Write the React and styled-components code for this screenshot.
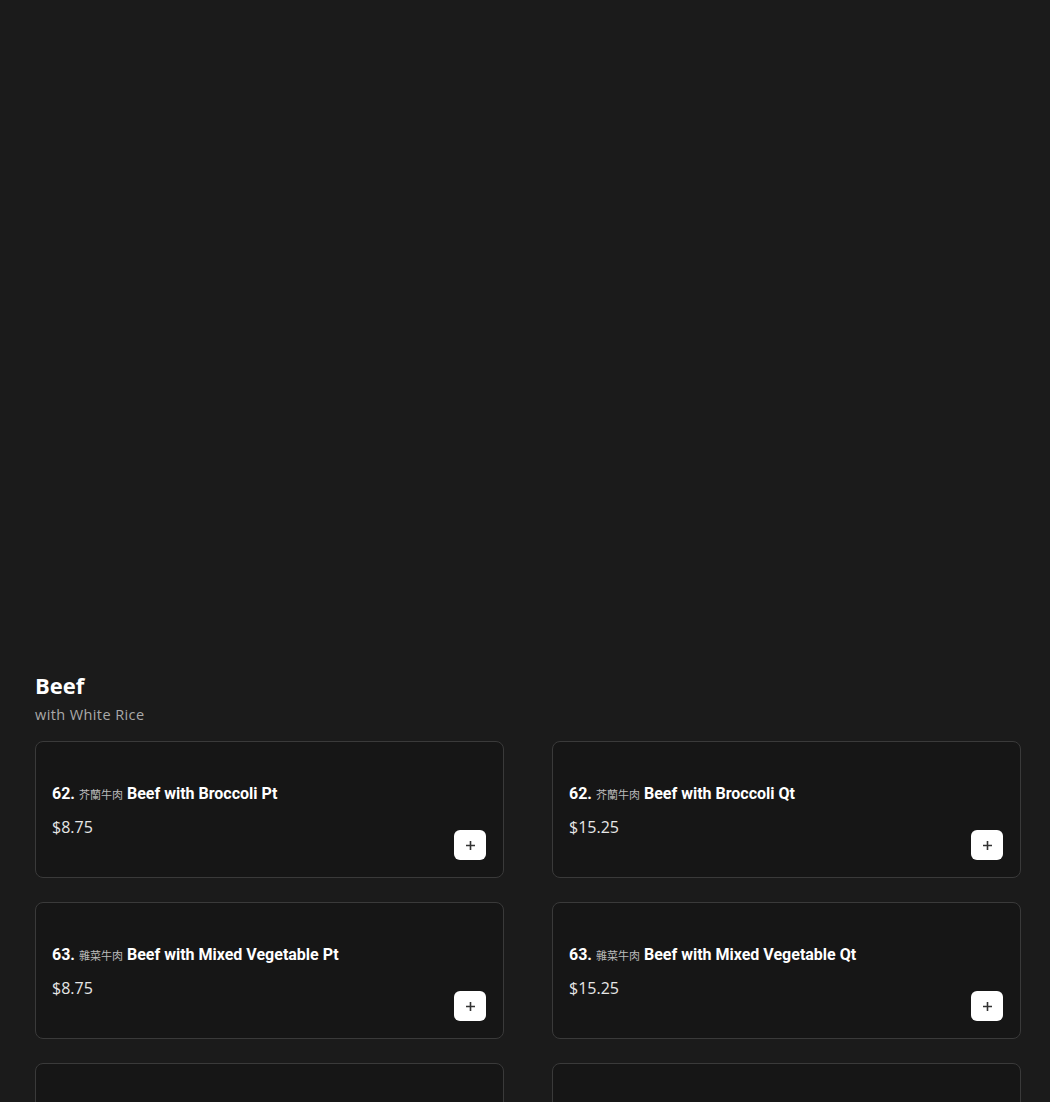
import React from "react";
import styled, { createGlobalStyle } from "styled-components";

const Global = createGlobalStyle`
  html, body { margin: 0; padding: 0; background: #1b1b1b; }
  body { font-family: "Open Sans", "Noto Sans CJK SC", sans-serif; color: #fff; }
  * { box-sizing: border-box; }
`;

const Page = styled.div`
  min-height: 1102px;
  background: #1b1b1b;
`;

const Hero = styled.div`
  height: 667px;
`;

const Section = styled.section`
  padding: 0 29px 0 35px;
`;

const Heading = styled.h2`
  margin: 0;
  font-family: "Open Sans", sans-serif;
  font-weight: 700;
  font-size: 22px;
  line-height: 36px;
  color: #fff;
`;

const Sub = styled.div`
  font-family: "Open Sans", sans-serif;
  font-size: 14.5px;
  letter-spacing: 0.4px;
  line-height: 20px;
  color: #a9a9a9;
  margin-top: 2px;
  margin-bottom: 16px;
`;

const Grid = styled.div`
  display: grid;
  grid-template-columns: 469px 469px;
  column-gap: 48px;
  row-gap: 24px;
`;

const Card = styled.div`
  height: 137px;
  border: 1px solid #3a3a3a;
  border-radius: 8px;
  background: #161616;
  padding: 36px 17px 16px 16px;
  display: flex;
  flex-direction: column;
  position: relative;
`;

const Title = styled.div`
  font-family: Roboto, "Noto Sans CJK SC", sans-serif;
  font-weight: 700;
  font-size: 16px;
  line-height: 32px;
  color: #fff;
`;

const Cjk = styled.span`
  font-size: 11px;
  font-weight: 400;
  color: #bbb;
`;

const Price = styled.div`
  font-family: "Open Sans", sans-serif;
  font-size: 16px;
  line-height: 30px;
  color: #e6e6e6;
`;

const Footer = styled.div`
  display: flex;
  justify-content: flex-end;
  margin-top: -12px;
`;

const AddButton = styled.button`
  width: 32px;
  height: 30px;
  border: none;
  border-radius: 6px;
  background: #fff;
  display: flex;
  align-items: center;
  justify-content: center;
  padding: 0;
  cursor: pointer;
`;

const Plus = () => (
  <svg width="11" height="11" viewBox="0 0 11 11" fill="none">
    <path d="M5.5 1v9M1 5.5h9" stroke="#333" strokeWidth="1.6" />
  </svg>
);

const items = [
  { num: "62.", zh: "芥蘭牛肉", en: "Beef with Broccoli Pt", price: "$8.75" },
  { num: "62.", zh: "芥蘭牛肉", en: "Beef with Broccoli Qt", price: "$15.25" },
  { num: "63.", zh: "雜菜牛肉", en: "Beef with Mixed Vegetable Pt", price: "$8.75" },
  { num: "63.", zh: "雜菜牛肉", en: "Beef with Mixed Vegetable Qt", price: "$15.25" },
  { num: "64.", zh: "", en: "", price: "" },
  { num: "64.", zh: "", en: "", price: "" },
];

export default function App() {
  return (
    <Page>
      <Global />
      <Hero />
      <Section>
        <Heading>Beef</Heading>
        <Sub>with White Rice</Sub>
        <Grid>
          {items.map((it, i) => (
            <Card key={i}>
              {it.en && (
                <>
                  <Title>
                    {it.num} <Cjk>{it.zh}</Cjk> {it.en}
                  </Title>
                  <Price>{it.price}</Price>
                  <Footer>
                    <AddButton aria-label="Add">
                      <Plus />
                    </AddButton>
                  </Footer>
                </>
              )}
            </Card>
          ))}
        </Grid>
      </Section>
    </Page>
  );
}
